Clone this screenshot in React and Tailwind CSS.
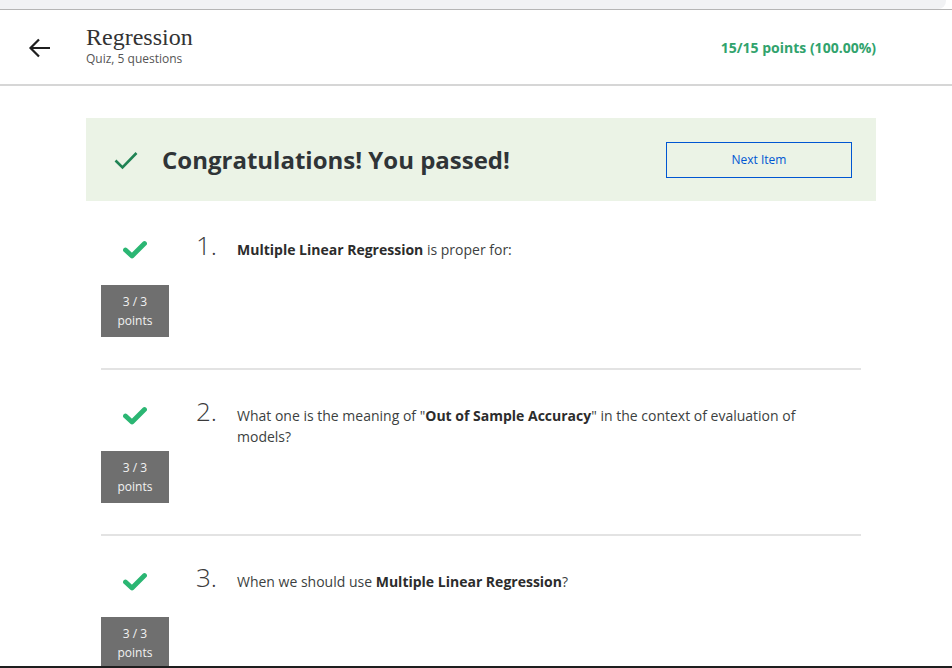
import React from "react";

const body = { fontFamily: '"Open Sans", "Noto Sans", sans-serif' };

function ThickCheck() {
  return (
    <svg width="24" height="19" viewBox="0 0 24 19">
      <path d="M2.5 10 L9 16 L21.5 3.5" fill="none" stroke="#2bb673" strokeWidth="4.8" strokeLinecap="round" strokeLinejoin="round" />
    </svg>
  );
}

function ThinCheck() {
  return (
    <svg width="24" height="20" viewBox="0 0 24 20">
      <path d="M1.5 10.5 L8.5 17.5 L22.5 3" fill="none" stroke="#1f8354" strokeWidth="2.6" />
    </svg>
  );
}

function Question({ n, first, children }) {
  return (
    <div className={first ? "pt-[31px]" : "pt-[28px]"}>
      <div className="flex">
        <div className="ml-[15px] w-[68px] flex flex-col items-center">
          <div className="h-[34px] flex items-center justify-center">
            <ThickCheck />
          </div>
          <div className="mt-[19px] w-[68px] h-[52px] bg-[#6f6f6f] text-[#f2f2f2] text-[12px] leading-[19px] flex flex-col items-center justify-center">
            <span>3 / 3</span>
            <span>points</span>
          </div>
        </div>
        <div className="ml-[27px] flex items-baseline">
          <div className="w-[41px] text-[26px] font-light text-[#3a3a3a] leading-[26px]">{n}.</div>
          <div className="w-[580px] text-[14px] leading-[21px] text-[#3c3f41]">{children}</div>
        </div>
      </div>
      <div className="mt-[31px] ml-[15px] w-[760px] h-[2px] bg-[#e3e3e3]" />
    </div>
  );
}

export default function App() {
  return (
    <div className="w-[952px] bg-white" style={body}>
      <div className="h-[9px] bg-white">
        <div className="h-[9px] w-[946px] bg-[#f1f2f4] rounded-br-[8px]" />
      </div>
      <div className="h-px bg-[#b5b5b5]" />
      <header className="h-[76px] flex items-center border-b-2 border-[#d6d6d6]">
        <div className="w-[86px] flex justify-center pr-[6px] pt-[2px]">
          <svg width="24" height="22" viewBox="0 0 24 22">
            <path d="M22 11 H3 M11 2.5 L2.5 11 L11 19.5" fill="none" stroke="#1f1f1f" strokeWidth="2.2" />
          </svg>
        </div>
        <div className="flex flex-col pb-[3px]">
          <div className="text-[24px] leading-[24px] text-[#333]" style={{ fontFamily: '"Liberation Serif", serif' }}>Regression</div>
          <div className="mt-[2px] text-[12px] leading-[16px] text-[#555]">Quiz, 5 questions</div>
        </div>
        <div className="ml-auto mr-[76px] text-[14px] font-bold text-[#31a36d]">15/15 points (100.00%)</div>
      </header>
      <main className="pl-[86px] pt-[32px] pb-[40px]">
        <div className="w-[790px] h-[83px] bg-[#ebf3e6] flex items-center">
          <div className="ml-[28px]">
            <ThinCheck />
          </div>
          <div className="ml-[24px] text-[24px] font-bold text-[#2f3437]">Congratulations! You passed!</div>
          <div className="ml-auto mr-[24px] w-[186px] h-[36px] border border-[#0056d2] flex items-center justify-center text-[12px] text-[#0056d2]">Next Item</div>
        </div>
        <Question n="1" first>
          <b className="text-[#2c2c2c]">Multiple Linear Regression</b> is proper for:
        </Question>
        <Question n="2">
          What one is the meaning of "<b className="text-[#2c2c2c]">Out of Sample Accuracy</b>" in the context of evaluation of models?
        </Question>
        <Question n="3">
          When we should use <b className="text-[#2c2c2c]">Multiple Linear Regression</b>?
        </Question>
      </main>
      <div className="fixed left-0 bottom-0 w-full h-[2px] bg-[#1e1e1e]" />
    </div>
  );
}
